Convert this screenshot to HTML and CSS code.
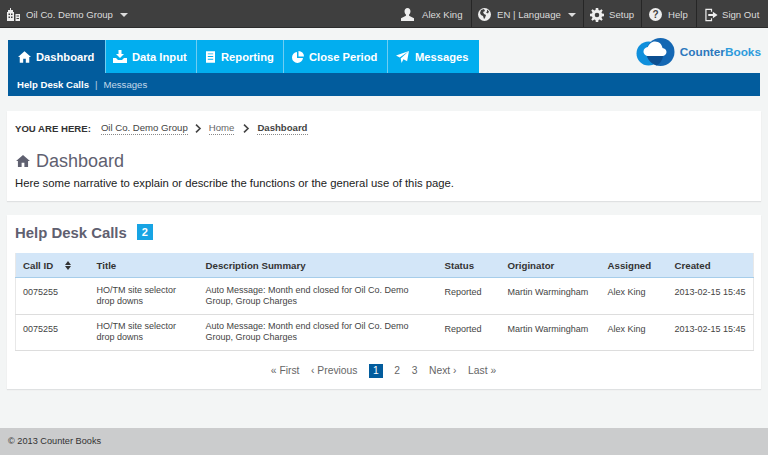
FILE: index.html
```html
<!DOCTYPE html>
<html>
   <head>
      <meta name="viewport" content="width=device-width, initial-scale=1.0"/>
      <title>Counter Books - Dashboard</title>
      <link rel="stylesheet" href="styles.css">
   </head>
   <body>
      <!--top bar-->
      <div class="topbar">
         <div class="top-item top-group">
            <svg class="top-icon" width="13" height="13" viewBox="0 0 13 13"><path fill="#eee" fill-rule="evenodd" d="M3 0h1v2h2v2h1v9H0V4h1V2h2zM1.500 5.500v1.500h1.500V5.500zM4 5.500v1.500h1.500V5.500zM1.500 8.500V10h1.500V8.500zM4 8.500V10h1.500V8.500zM8.500 6H13v7H8.500zM9.500 7.500v1h2.500v-1zM9.500 10v1h2.500v-1z"/></svg>
            <span>Oil Co. Demo Group</span>
            <span class="caret"></span>
         </div>
         <div class="top-right">
            <div class="top-item top-user">
               <svg class="top-icon" width="13" height="13" viewBox="0 0 14 14"><path fill="#eee" d="M7 0c2 0 3.200 1.500 3.200 3.600 0 1.500-.6 2.800-1.500 3.500v1.300L14 11v3H0v-3l5.300-2.600V7.100C4.400 6.400 3.800 5.100 3.800 3.600 3.800 1.500 5 0 7 0z"/></svg>
               <span>Alex King</span>
            </div>
            <div class="top-item top-lang">
               <svg class="top-icon" width="13" height="13" viewBox="0 0 13 13"><circle cx="6.500" cy="6.500" r="6.500" fill="#eee"/><path fill="#3f3f3f" d="M3 2l3-1 1 2-2 1 1 2 2 1-1 3-1 1-1-3-2-1-1-2zM9 1.500l2 2-1 2-2-1 1-1z"/></svg>
               <span>EN | Language</span>
               <span class="caret"></span>
            </div>
            <div class="top-item top-setup">
               <svg class="top-icon" width="14" height="14" viewBox="0 0 14 14"><path fill="#eee" fill-rule="evenodd" d="M5.800 0h2.400l.3 2 1.200.5L11.400 1.300l1.300 1.300-1.200 1.700.5 1.200 2 .3v2.400l-2 .3-.5 1.200 1.200 1.700-1.300 1.300-1.700-1.200-1.200.5-.3 2H5.800l-.3-2-1.200-.5-1.700 1.200-1.300-1.300 1.200-1.700-.5-1.200-2-.3V5.800l2-.3.5-1.200-1.200-1.700 1.300-1.300 1.700 1.200 1.200-.5zM7 4.700a2.300 2.300 0 1 0 0 4.600 2.300 2.300 0 0 0 0-4.600z"/></svg>
               <span>Setup</span>
            </div>
            <div class="top-item top-help">
               <span class="help-mark">?</span>
               <span>Help</span>
            </div>
            <div class="top-item top-signout">
               <svg class="top-icon" width="13" height="14" viewBox="0 0 14 14"><path fill="none" stroke="#eee" stroke-width="1.300" d="M7 3.500V1H1v12h6v-2.500"/><path fill="#eee" d="M3.500 6h5V3.500L13.500 7l-5 3.500V8h-5z"/></svg>
               <span>Sign Out</span>
            </div>
         </div>
      </div>

      <!--tabs and logo-->
      <div class="head">
         <ul class="tabs">
            <li class="tab tab-active">
               <svg width="13" height="12" viewBox="0 0 15 13"><path fill="#fff" d="M7.500 0L15 6.500h-2V13H9V8.500H6V13H2V6.500H0z"/></svg>
               Dashboard
            </li>
            <li class="tab tab-data">
               <svg width="14" height="13" viewBox="0 0 14 13"><path fill="#fff" d="M5.500 0h3v4H11L7 8 3 4h2.500zM0 8h3l2 2h4l2-2h3v5H0z"/></svg>
               Data Input
            </li>
            <li class="tab tab-report">
               <svg width="9" height="12" viewBox="0 0 10 13"><path fill="#fff" fill-rule="evenodd" d="M0 0h10v13H0zM2 2.500v1h6v-1zM2 5.500v1h6v-1zM2 8.500v1h6v-1z"/></svg>
               Reporting
            </li>
            <li class="tab tab-close">
               <svg width="12" height="12" viewBox="0 0 12 12"><path fill="#fff" d="M5 1v6h6a5.500 5.500 0 1 1-6-6zM6.500 0A5.500 5.500 0 0 1 12 5.500H6.500z"/></svg>
               Close Period
            </li>
            <li class="tab tab-msg">
               <svg width="13" height="12" viewBox="0 0 14 13"><path fill="#fff" d="M14 0l-2 11-4-2-2 4-1-5zM14 0L4 7 0 5z"/></svg>
               Messages
            </li>
         </ul>
         <div class="logo">
            <svg width="39" height="28" viewBox="0 0 39 28">
               <circle cx="12.500" cy="15.500" r="12" fill="#0f8fdc"/>
               <circle cx="24.500" cy="14" r="14" fill="#1467b3"/>
               <path fill="#0c4f91" d="M11 18h16c-.5 4-3 8-6.500 9.500-4-1.500-8.500-5-9.500-9.500z"/>
               <path fill="#fff" d="M12.500 18c-2.800 0-5-2-5-4.500s2-4.300 4.300-4.500C13 6 15.500 3.500 19 3.500c4 0 7 2.800 7.500 6.500 2.200.2 4 1.800 4 4s-1.800 4-4 4z"/>
            </svg>
            <span class="logo-text"><span class="logo-a">Counter</span><span class="logo-b">Books</span></span>
         </div>
      </div>
      <div class="subnav">
         <b>Help Desk Calls</b>
         <span class="subnav-sep">|</span>
         <span class="subnav-link">Messages</span>
      </div>

      <!--page intro-->
      <div class="card intro">
         <div class="crumbs">
            <b class="crumb-label">YOU ARE HERE:</b>
            <span class="crumb">Oil Co. Demo Group</span>
            <svg class="chevron" width="7" height="9" viewBox="0 0 7 9"><path fill="none" stroke="#444" stroke-width="1.600" d="M1 .7l4 3.800-4 3.800"/></svg>
            <span class="crumb crumb-home">Home</span>
            <svg class="chevron" width="7" height="9" viewBox="0 0 7 9"><path fill="none" stroke="#444" stroke-width="1.600" d="M1 .7l4 3.800-4 3.800"/></svg>
            <b class="crumb">Dashboard</b>
         </div>
         <h1 class="page-title">
            <svg width="14" height="12" viewBox="0 0 15 13"><path fill="#5f6070" d="M7.500 0L15 6.500h-2V13H9V8.500H6V13H2V6.500H0z"/></svg>
            Dashboard
         </h1>
         <p class="narrative">Here some narrative to explain or describe the functions or the general use of this page.</p>
      </div>

      <!--help desk calls-->
      <div class="card calls">
         <h2 class="calls-title">Help Desk Calls <span class="count">2</span></h2>
         <table class="calls-table">
            <thead>
               <tr>
                  <th class="col-id">Call ID <span class="sort"><i class="sort-up"></i><i class="sort-down"></i></span></th>
                  <th class="col-title">Title</th>
                  <th class="col-desc">Description Summary</th>
                  <th class="col-status">Status</th>
                  <th class="col-orig">Originator</th>
                  <th class="col-assigned">Assigned</th>
                  <th class="col-created">Created</th>
               </tr>
            </thead>
            <tbody>
               <tr>
                  <td class="one-line">0075255</td>
                  <td>HO/TM site selector<br>drop downs</td>
                  <td>Auto Message: Month end closed for Oil Co. Demo<br>Group, Group Charges</td>
                  <td class="one-line">Reported</td>
                  <td class="one-line">Martin Warmingham</td>
                  <td class="one-line">Alex King</td>
                  <td class="one-line">2013-02-15 15:45</td>
               </tr>
               <tr class="row-last">
                  <td class="one-line">0075255</td>
                  <td>HO/TM site selector<br>drop downs</td>
                  <td>Auto Message: Month end closed for Oil Co. Demo<br>Group, Group Charges</td>
                  <td class="one-line">Reported</td>
                  <td class="one-line">Martin Warmingham</td>
                  <td class="one-line">Alex King</td>
                  <td class="one-line">2013-02-15 15:45</td>
               </tr>
            </tbody>
         </table>
         <div class="pager">
            <span>« First</span>
            <span>‹ Previous</span>
            <span class="page-on">1</span>
            <span>2</span>
            <span>3</span>
            <span>Next ›</span>
            <span>Last »</span>
         </div>
      </div>

      <div class="footer">© 2013 Counter Books</div>
   </body>
</html>
```

FILE: styles.css
```css
html, body {
margin: 0;
padding: 0;
}
body {
background-color: #f3f5f5;
color: #333;
font-family: "Liberation Sans", Arial, sans-serif;
font-size: 11px;
height: 455px;
overflow: hidden;
}

/* top bar */
.topbar {
display: flex;
justify-content: space-between;
height: 27px;
background-color: #3f3f3f;
border-bottom: 1px solid #2c2c2c;
color: #dcdcdc;
font-size: 9.6px;
}
.top-right {
display: flex;
}
.top-item {
display: flex;
align-items: center;
height: 27px;
padding-top: 2px;
box-sizing: border-box;
}
.top-group {
padding-left: 7px;
}
.top-group span:first-of-type {
margin-left: 6px;
}
.top-user {
width: 72px;
padding-left: 2px;
}
.top-user span {
margin-left: 8px;
}
.top-lang, .top-setup, .top-help, .top-signout {
border-left: 1px solid #262626;
}
.top-lang {
width: 112px;
padding-left: 6px;
}
.top-lang span:first-of-type {
margin-left: 6px;
}
.top-setup {
width: 58px;
padding-left: 6px;
}
.top-setup span {
margin-left: 5px;
}
.top-help {
width: 55px;
padding-left: 7px;
}
.top-help span:last-child {
margin-left: 6px;
}
.top-signout {
width: 72px;
padding-left: 8px;
}
.top-signout span {
margin-left: 4px;
}
.help-mark {
display: block;
width: 13px;
height: 13px;
border-radius: 50%;
background-color: #eee;
color: #3f3f3f;
font-size: 10px;
font-weight: bold;
line-height: 13px;
text-align: center;
}
.caret {
width: 0;
height: 0;
margin-left: 7px;
border-top: 4px solid #dcdcdc;
border-left: 4px solid transparent;
border-right: 4px solid transparent;
}

/* tabs */
.head {
display: flex;
justify-content: space-between;
height: 33px;
margin: 12px 7px 0 8px;
}
.tabs {
display: flex;
list-style-type: none;
margin: 0;
padding: 0;
}
.tab {
display: flex;
align-items: center;
gap: 5px;
box-sizing: border-box;
padding-left: 7px;
background-color: #02aeef;
border-left: 1px solid #6fcdf2;
color: #fff;
font-size: 11.2px;
font-weight: bold;
}
.tab-active {
width: 97px;
padding-left: 10px;
background-color: #025c9d;
border-left: 0;
}
.tab-data {
width: 91px;
}
.tab-report {
width: 87px;
padding-left: 9px;
gap: 6px;
}
.tab-close {
width: 104px;
padding-left: 8px;
}
.tab-msg {
width: 92px;
padding-left: 8px;
gap: 6px;
}
.logo {
display: flex;
align-items: center;
gap: 5px;
margin-top: -2px;
height: 28px;
}
.logo-text {
font-size: 11.8px;
font-weight: bold;
}
.logo-a {
color: #2b78bd;
}
.logo-b {
color: #2d9bdc;
}
.subnav {
display: flex;
align-items: center;
height: 23px;
margin: 0 8px;
padding-left: 9px;
background-color: #025c9d;
color: #fff;
font-size: 9.6px;
}
.subnav-sep {
margin: 0 6px;
color: #b9d2e5;
}
.subnav-link {
color: #c4d9ea;
}

/* cards */
.card {
margin-left: 7px;
width: 754px;
background-color: #fff;
box-shadow: 0 1px 1px #dfe1e2;
box-sizing: border-box;
}
.intro {
height: 90px;
margin-top: 15px;
padding: 11px 8px 0 8px;
}
.crumbs {
display: flex;
align-items: center;
font-size: 9.6px;
color: #444;
}
.crumb-label {
margin-right: 10px;
color: #333;
}
.crumb {
border-bottom: 1px dotted #888;
line-height: 12px;
}
.crumb-home {
margin-right: 2px;
color: #666;
}
.chevron {
margin: 0 7px;
}
.page-title {
display: flex;
align-items: center;
gap: 6px;
margin: 15px 0 0 0;
padding-left: 1px;
color: #5f6070;
font-size: 18px;
font-weight: normal;
line-height: 22px;
}
.narrative {
margin: 4px 0 0 0;
color: #222;
font-size: 11.3px;
line-height: 14px;
}
.calls {
height: 174px;
margin-top: 14px;
padding: 9px 7px 0 8px;
}
.calls-title {
display: flex;
align-items: center;
margin: 0;
color: #5f6070;
font-size: 14.9px;
font-weight: bold;
line-height: 18px;
}
.count {
width: 16px;
height: 16px;
margin: 0 0 2px 10px;
background-color: #17a4e4;
color: #fff;
font-size: 11px;
line-height: 16px;
text-align: center;
}

/* table */
.calls-table {
border-collapse: collapse;
margin-top: 11px;
width: 739px;
table-layout: fixed;
font-size: 9px;
color: #444;
}
.calls-table th {
box-sizing: border-box;
height: 24px;
padding: 1px 0 0 7px;
background-color: #d3e6f8;
border-bottom: 1px solid #a6cdea;
color: #333;
font-size: 9.7px;
text-align: left;
}
.calls-table td {
box-sizing: border-box;
height: 37px;
padding: 0 0 0 7px;
border-bottom: 1px solid #ddd;
line-height: 11px;
}
.calls-table .row-last td {
height: 36px;
}
.calls-table td.one-line {
padding-bottom: 6px;
}
.calls-table td:first-child, .calls-table th:first-child {
border-left: 1px solid #e8e8e8;
}
.calls-table td:last-child, .calls-table th:last-child {
border-right: 1px solid #e8e8e8;
}
.col-id { width: 74px; }
.col-title { width: 109px; }
.col-desc { width: 239px; }
.col-status { width: 63px; }
.col-orig { width: 100px; }
.col-assigned { width: 67px; }
.sort {
display: inline-block;
vertical-align: -1px;
margin-left: 9px;
}
.sort i {
display: block;
width: 0;
height: 0;
border-left: 3px solid transparent;
border-right: 3px solid transparent;
}
.sort-up {
border-bottom: 4px solid #333;
margin-bottom: 1px;
}
.sort-down {
border-top: 4px solid #333;
}

/* pager */
.pager {
display: flex;
justify-content: center;
align-items: center;
gap: 11.6px;
margin-top: 13px;
padding-right: 2px;
color: #666;
font-size: 10.3px;
}
.page-on {
padding: 0 4px;
background-color: #025c9d;
color: #fff;
line-height: 14px;
}

.footer {
position: absolute;
left: 0;
right: 0;
bottom: 0;
height: 27px;
padding-left: 8px;
background-color: #cbcccd;
color: #333;
font-size: 9.2px;
line-height: 26px;
}
```
